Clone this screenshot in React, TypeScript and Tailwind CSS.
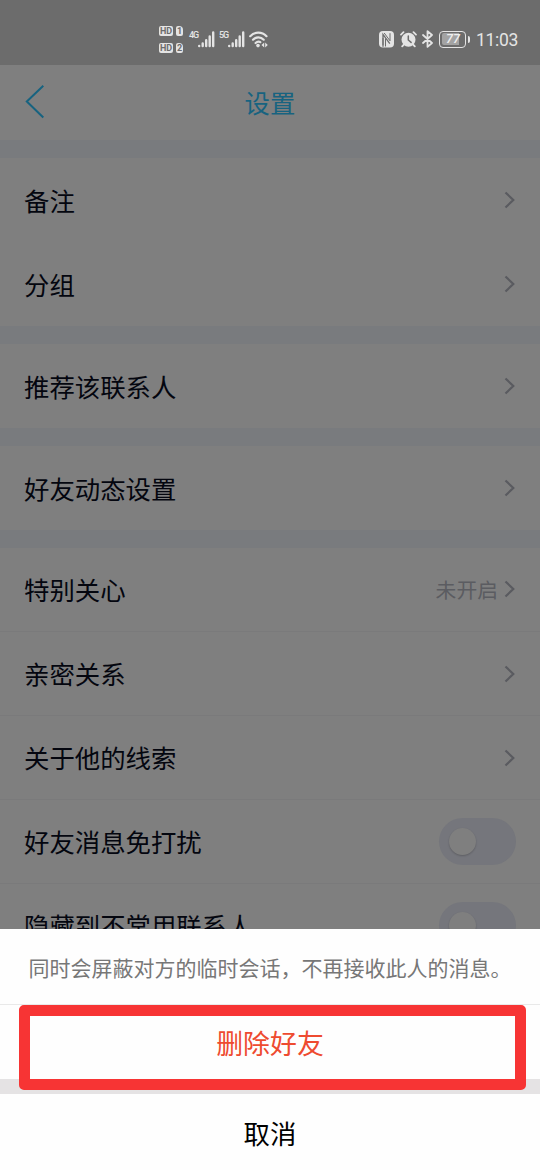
import clsx from "clsx";

type Item = { label: string; value?: string; toggle?: boolean };

const groups: Item[][] = [
  [{ label: "备注" }, { label: "分组" }],
  [{ label: "推荐该联系人" }],
  [{ label: "好友动态设置" }],
  [
    { label: "特别关心", value: "未开启" },
    { label: "亲密关系" },
    { label: "关于他的线索" },
    { label: "好友消息免打扰", toggle: true },
    { label: "隐藏到不常用联系人", toggle: true },
  ],
];

export default function App() {
  return (
    <div className="relative flex flex-col w-[540px] h-[1170px] overflow-hidden bg-[#7f7f7f] font-['Noto_Sans_CJK_SC',sans-serif]">
      <StatusBar />

      {/* Header */}
      <header className="grid grid-cols-[1fr_auto_1fr] items-center h-[75px] shrink-0 px-6 pb-px">
        <svg className="w-5 h-[34px]" viewBox="0 0 20 34" fill="none" stroke="#176380" strokeWidth="2">
          <path d="M19.3.8 2.8 16.5 19.3 32.5" />
        </svg>
        <h1 className="text-[25.4px] leading-none text-[#176380] pt-px">设置</h1>
      </header>

      {/* Settings list */}
      <main className="flex flex-col shrink-0">
        {groups.map((items, i) => (
          <section key={i} className="border-t-[18px] border-[#797b7e]">
            {items.map((item) => (
              <Row key={item.label} item={item} divided={i === 3} />
            ))}
          </section>
        ))}
      </main>

      {/* Action sheet */}
      <div className="absolute inset-x-0 bottom-0 h-[241px] flex flex-col bg-[#fefefe]">
        <p className="flex items-center justify-center h-[76px] border-b border-[#e9e9e9] text-[21px] leading-none text-[#777777] whitespace-nowrap pt-px">
          同时会屏蔽对方的临时会话，不再接收此人的消息。
        </p>
        <button className="h-[74px] text-[26.9px] leading-none text-[#ee4b30] pt-0.5">删除好友</button>
        <div className="h-[15px] bg-[#e5e3e4]" />
        <button className="flex-1 text-[26.4px] leading-none text-black pt-[3px]">取消</button>
        {/* Highlight around the delete button */}
        <div className="absolute left-[19px] top-[76px] w-[507px] h-[85px] rounded-[5px] border-[11px] border-[#f73434]" />
      </div>
    </div>
  );
}

function Row({ item, divided }: { item: Item; divided: boolean }) {
  return (
    <div className={clsx("flex items-center justify-between h-[84px] px-6", divided && "border-b border-[#7a7a7b]")}>
      <span className="text-[25.4px] leading-none text-[#04060f] pt-px">{item.label}</span>
      {item.toggle ? (
        <div className="w-[77px] h-[47px] rounded-full bg-[#75767c] p-2.5">
          <div className="size-[27px] rounded-full bg-[#7f7f7f] shadow-[0_1px_2px_rgba(0,0,0,0.2)]" />
        </div>
      ) : (
        <div className="flex items-center gap-1.5">
          {item.value && <span className="text-[20.8px] leading-none text-[#5b5c61]">{item.value}</span>}
          <svg className="w-3 h-[18px]" viewBox="0 0 12 18" fill="none" stroke="#5a5b60" strokeWidth="2.2">
            <path d="M1.5 1.5 9.3 9 1.5 16.5" />
          </svg>
        </div>
      )}
    </div>
  );
}

function HdBadge({ sim }: { sim: string }) {
  return (
    <div className="flex gap-[3px] text-[9px] leading-[10px] font-bold text-[#6c6c6c] text-center font-['Roboto',sans-serif]">
      <span className="w-3.5 h-2.5 rounded-[2px] bg-[#e4e4e4]">HD</span>
      <span className="w-[7px] h-2.5 rounded-[2px] rounded-tr-[4px] bg-[#e4e4e4]">{sim}</span>
    </div>
  );
}

function Signal({ label }: { label: string }) {
  return (
    <div className="flex items-start">
      <span className="w-[9px] text-[9px] leading-[9px] tracking-[-1px] font-medium text-[#e4e4e4] font-['Roboto',sans-serif]">{label}</span>
      <svg className="w-[17px] h-[17px]" viewBox="0 0 17 17" stroke="#e4e4e4" strokeWidth="2.4" strokeLinecap="round">
        <path d="M1.2 14.9v.1M4.7 12.4V15M8.2 9.2V15M11.7 5.5V15M15.2 1.5V15" />
      </svg>
    </div>
  );
}

function StatusBar() {
  return (
    <div className="flex items-start justify-between h-[65px] shrink-0 bg-[#6c6c6c] pl-[159px] pr-[22px] pt-[26px]">
      <div className="flex items-start">
        <div className="flex flex-col gap-[7px] mr-1.5">
          <HdBadge sim="1" />
          <HdBadge sim="2" />
        </div>
        <div className="flex gap-1 pt-[5px]">
          <Signal label="4G" />
          <Signal label="5G" />
          <svg className="w-[19px] h-[17px]" viewBox="0 0 19 17" fill="none" stroke="#e4e4e4" strokeWidth="2.2" strokeLinecap="round">
            <path d="M1.2 5.2c4.6-4.9 11.7-4.9 16.3 0M4 8.7c3-3.1 7.7-3.1 10.7 0M6.6 12c1.6-1.5 3.5-1.6 4.7-.8" />
            <circle cx="9" cy="14.6" r="1.8" fill="#e4e4e4" stroke="none" />
            <path d="m15.2 11.5-2.7 2.6 2.7 2.5zM16.2 11.5v5.1l2.6-2.5z" fill="#e4e4e4" stroke="none" />
          </svg>
        </div>
      </div>

      <div className="flex items-center h-[27px]">
        {/* NFC */}
        <svg className="w-[15px] h-[17px] mr-[6px] mb-px" viewBox="0 0 15 17" fill="none">
          <rect width="15" height="16.5" rx="4" fill="#e4e4e4" />
          <path d="M4 14.6V3.4L10.8 12.6" stroke="#6c6c6c" strokeWidth="1.3" />
          <path d="M5.2 2 11 9.8V2.2M4 16V7M6.5 7.6v7.9" stroke="#6c6c6c" strokeWidth="1" />
        </svg>
        {/* Alarm */}
        <svg className="w-[17px] h-[17px] mr-[5px]" viewBox="0 0 17 17" fill="none" stroke="#e4e4e4" strokeWidth="1.8" strokeLinecap="round">
          <circle cx="8.5" cy="8.7" r="7" fill="#e4e4e4" stroke="none" />
          <path d="M1 3.6 3.5 1.2M16 3.6l-2.5-2.4M3.6 13.8l-1.4 1.6M13.4 13.8l1.4 1.6" />
          <path d="M8.3 5v4l2.8 2.4" stroke="#6c6c6c" strokeWidth="1.5" />
        </svg>
        {/* Bluetooth */}
        <svg className="w-[11px] h-[18px] mr-[6px] mb-px" viewBox="0 0 11 18" fill="none" stroke="#e4e4e4" strokeWidth="1.8" strokeLinejoin="round" strokeLinecap="round">
          <path d="m1 5 9 8-4.5 3.9V1.1L10 5l-9 8" />
        </svg>
        {/* Battery */}
        <div className="flex items-center gap-[1.5px] mr-[6px] mb-px">
          <div className="w-[27px] h-[17px] rounded-[4px] border-[1.5px] border-[#e4e4e4] p-[1.5px]">
            <div className="h-full rounded-[2px] bg-[linear-gradient(90deg,#a3a3a3_77%,transparent_77%)] text-center text-[12.5px] leading-[12px] font-medium italic text-[#efefef] font-['Roboto',sans-serif]">
              77
            </div>
          </div>
          <div className="w-[2px] h-[7px] rounded-r bg-[#e4e4e4]" />
        </div>
        <span className="text-[17.5px] leading-none text-[#e4e4e4] font-['Roboto',sans-serif] tracking-[-0.3px] pt-[2px]">11:03</span>
      </div>
    </div>
  );
}
